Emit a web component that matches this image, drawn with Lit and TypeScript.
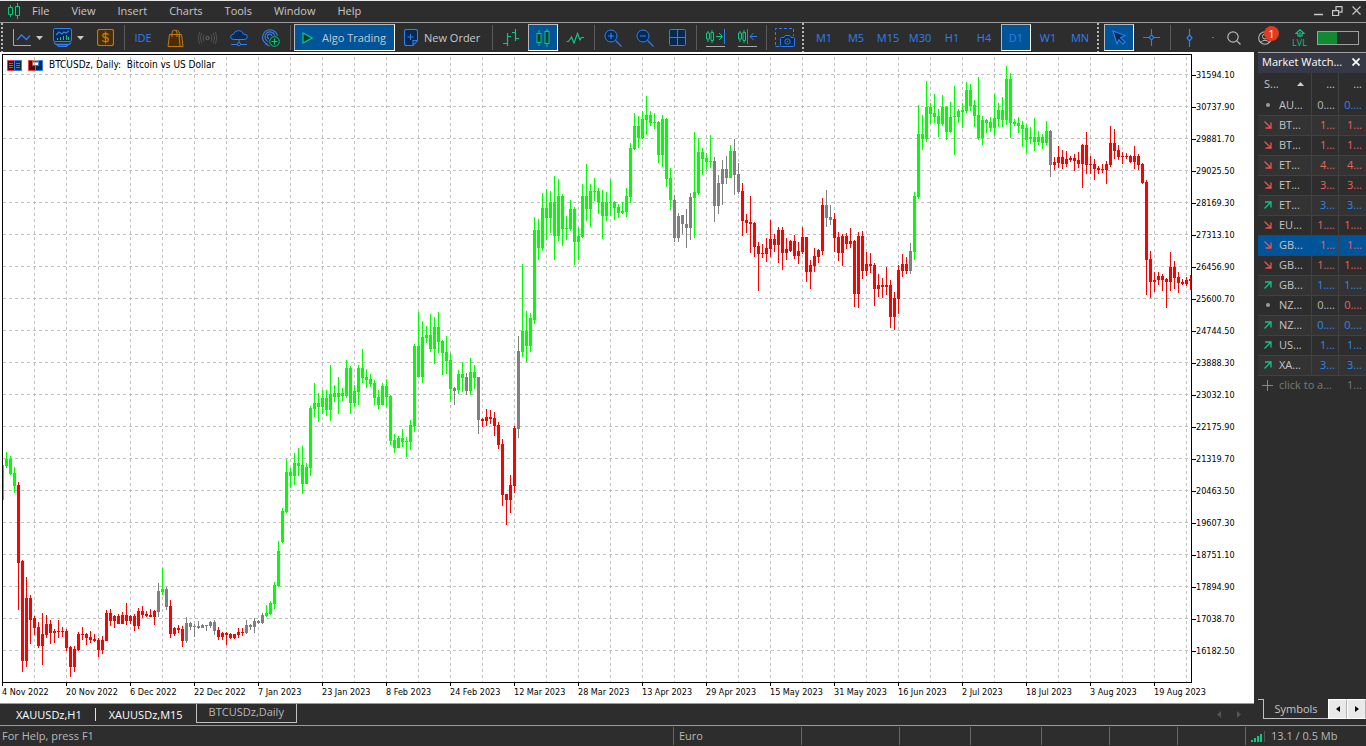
import { LitElement, html, css, svg } from "lit";
import { customElement } from "lit/decorators.js";
import { classMap } from "lit/directives/class-map.js";

const MENU = ["File", "View", "Insert", "Charts", "Tools", "Window", "Help"];
const FRAMES = ["M1", "M5", "M15", "M30", "H1", "H4", "D1", "W1", "MN"];

const PRICES = [
  "31594.10", "30737.90", "29881.70", "29025.50", "28169.30", "27313.10", "26456.90",
  "25600.70", "24744.50", "23888.30", "23032.10", "22175.90", "21319.70", "20463.50",
  "19607.30", "18751.10", "17894.90", "17038.70", "16182.50",
];

const DATES = [
  "4 Nov 2022", "20 Nov 2022", "6 Dec 2022", "22 Dec 2022", "7 Jan 2023", "23 Jan 2023",
  "8 Feb 2023", "24 Feb 2023", "12 Mar 2023", "28 Mar 2023", "13 Apr 2023", "29 Apr 2023",
  "15 May 2023", "31 May 2023", "16 Jun 2023", "2 Jul 2023", "18 Jul 2023", "3 Aug 2023",
  "19 Aug 2023",
];

// Runs of daily bars that share a trend colour: G up, R down, Y neutral.
// Each bar is high, body top, body bottom, low, measured down the price scale.
const RUNS: [string, string][] = [
  ["G", "465,465,499,499 452,459,465,467 456,459,473,474 467,473,485,492"],
  ["R", "482,485,562,609 560,561,660,671 577,598,660,666 595,598,619,643 616,618,627,634 622,627,645,647 613,634,645,664 615,624,634,637 620,624,632,643 629,631,632,642 620,631,631,637 627,631,631,636 629,631,647,650 646,647,666,676 646,649,666,671 632,634,649,650 627,634,634,639 633,634,637,644 631,637,639,642 634,639,640,641 638,640,649,656 636,640,649,653 610,613,640,640 609,613,620,625 615,616,620,627 614,616,623,623 612,615,623,623 603,615,620,624 615,616,620,623 614,616,625,630 608,611,625,628 606,611,614,617 611,614,615,616 609,615,616,616 610,611,616,624"],
  ["Y", "583,591,611,616"],
  ["G", "568,589,591,594"],
  ["Y", "587,589,606,609"],
  ["R", "600,606,633,637 627,628,633,635 625,628,629,632 626,629,640,646"],
  ["Y", "617,623,640,642 622,623,626,629 624,626,626,636 621,626,627,628 624,625,627,627 625,625,625,630 621,622,625,627 620,622,630,634"],
  ["R", "627,630,636,639 632,633,636,639 632,633,634,644 633,634,637,638 634,634,637,638 628,632,634,637 628,632,632,635"],
  ["Y", "620,625,632,633 624,625,626,629 618,621,626,632 620,621,622,623 613,615,622,623"],
  ["G", "605,613,615,616 601,603,613,614 582,585,603,608 541,551,585,586 508,511,541,542 459,472,511,512 468,472,475,487 453,463,475,484 448,463,465,475 446,465,483,493 463,467,483,483 406,408,467,475 383,403,408,416 393,403,406,421 390,398,406,413 390,398,409,415 365,394,409,420 385,393,396,401 377,393,396,413 388,393,395,400 360,368,395,397 366,368,402,413 385,391,402,406 365,368,391,404 349,368,377,382 369,377,379,387 374,379,383,386 380,383,397,404 390,397,404,408 383,386,404,404 379,386,396,406 395,396,440,444 434,440,447,452 436,438,447,447 429,438,441,446 437,441,441,456 420,425,441,449 344,346,425,431 312,346,376,376 321,337,376,382 326,335,337,342 314,335,348,351 317,327,348,363 312,327,341,352 340,341,352,374 336,352,360,373 353,360,388,401"],
  ["Y", "387,388,390,404"],
  ["G", "370,374,389,393 362,374,377,391"],
  ["Y", "373,377,390,394"],
  ["G", "358,372,390,394 365,372,377,388"],
  ["Y", "377,377,419,433"],
  ["R", "418,419,420,426 409,417,420,425 410,417,418,423 412,418,425,435 422,425,444,448 439,444,494,505 494,494,499,524 475,485,499,512 426,428,485,492"],
  ["Y", "336,351,428,437"],
  ["G", "264,331,351,356 311,331,345,361 313,318,345,351 217,230,319,323 219,230,247,259 193,208,247,250 189,208,217,239 191,202,217,232 176,202,235,259 179,196,235,240 194,196,228,245 216,228,228,239 200,209,228,230 207,209,241,264 227,236,241,259 184,196,236,237 164,196,208,220 184,191,208,226 178,191,191,200 188,191,202,213 190,202,215,238 192,202,215,220 179,202,202,215 201,202,207,219 204,207,212,217 202,211,212,213 188,196,211,216 143,148,196,202 113,126,148,149 116,126,137,147 111,119,137,138 96,115,119,134 111,115,122,125 113,122,122,128 121,122,154,162 115,119,154,166 118,119,178,186 168,178,199,209"],
  ["Y", "195,200,237,241 213,216,237,241 215,215,223,233 209,224,227,247 193,197,227,239"],
  ["G", "132,192,197,237 138,152,192,194 148,152,158,174 153,158,161,169 135,161,161,167"],
  ["Y", "157,161,205,221 175,183,205,213 160,169,183,204 156,169,177,183"],
  ["G", "145,151,177,177"],
  ["Y", "139,151,174,194 163,174,191,193"],
  ["R", "183,191,220,235 214,220,222,232 196,222,223,252 222,223,246,256 242,246,253,290 244,253,253,257 238,248,253,261 220,239,248,256 234,239,244,251 227,230,244,262 227,230,252,269 238,249,252,259 240,241,250,251 235,241,255,258 242,251,255,263 227,237,251,253 237,237,271,281 260,265,271,288 248,256,265,271 249,250,256,262 198,205,250,254"],
  ["Y", "190,205,217,226 205,217,219,224"],
  ["R", "213,219,237,251 232,237,252,260 234,236,252,265 233,236,243,248 228,241,243,247 240,241,293,306 232,236,293,307 231,236,270,278 252,264,270,275 253,264,265,272 263,265,288,305 274,285,288,296 278,285,286,297 267,285,286,294 280,285,316,327 292,298,316,329 265,270,298,313 254,264,270,276 257,264,270,273"],
  ["Y", "243,251,270,273"],
  ["G", "192,196,251,259 105,134,196,198 115,134,138,149 81,107,138,141 103,107,113,123 94,113,116,122 109,116,123,136 95,107,123,125 106,107,131,139 102,117,131,132 86,116,116,154 109,111,116,122 103,110,111,127 82,90,110,112 84,90,105,110 100,105,115,126 77,115,137,139 116,120,137,144 119,120,122,132 117,122,127,131 94,118,127,135 103,110,118,126 97,110,119,126 66,79,119,124 73,79,122,137 119,122,123,125 117,123,125,132 121,125,128,146 124,128,139,152 127,137,138,143 118,137,141,150 131,137,141,144 134,137,142,148 121,131,142,144"],
  ["Y", "130,131,164,176"],
  ["R", "157,162,164,169 146,157,162,167 150,157,163,168 151,159,163,166 156,158,159,161 154,158,160,170 152,160,163,167 144,145,163,187 132,145,164,173 156,164,164,173 159,164,168,179 166,168,169,173 164,169,169,172 161,164,169,183 126,143,164,166 129,143,150,158 145,150,156,159 152,156,156,163 153,156,156,158 155,156,161,162 146,156,161,168 154,156,164,169 163,164,182,183 180,182,259,294 251,259,281,297 272,280,281,291 272,276,279,284 274,276,279,290 278,279,281,307 252,267,281,290 261,267,277,288 272,277,282,292 279,282,283,284 277,280,283,285 275,279,280,289"],
];

const INK: Record<string, string> = { G: "#00ff00", R: "#ff0000", Y: "#808080" };
const SCALE_TOP = 55;
const STEP = 4;

type Dir = "down" | "up" | "flat";
type Quote = { s: string; dir: Dir; bid: string; ask: string; bc: string; ac: string; on?: boolean };
const QUOTES: Quote[] = [
  { s: "AU...", dir: "flat", bid: "0....", ask: "0....", bc: "plain", ac: "rise" },
  { s: "BT...", dir: "down", bid: "1...", ask: "1...", bc: "fall", ac: "fall" },
  { s: "BT...", dir: "down", bid: "1...", ask: "1...", bc: "fall", ac: "fall" },
  { s: "ET...", dir: "down", bid: "4...", ask: "4...", bc: "fall", ac: "fall" },
  { s: "ET...", dir: "down", bid: "3...", ask: "3...", bc: "fall", ac: "fall" },
  { s: "ET...", dir: "up", bid: "3...", ask: "3...", bc: "rise", ac: "rise" },
  { s: "EU...", dir: "down", bid: "1....", ask: "1....", bc: "fall", ac: "fall" },
  { s: "GB...", dir: "down", bid: "1...", ask: "1...", bc: "fall", ac: "fall", on: true },
  { s: "GB...", dir: "down", bid: "1....", ask: "1....", bc: "fall", ac: "fall" },
  { s: "GB...", dir: "up", bid: "1....", ask: "1....", bc: "rise", ac: "rise" },
  { s: "NZ...", dir: "flat", bid: "0....", ask: "0....", bc: "plain", ac: "fall" },
  { s: "NZ...", dir: "up", bid: "0....", ask: "0....", bc: "rise", ac: "rise" },
  { s: "US...", dir: "up", bid: "1...", ask: "1...", bc: "rise", ac: "rise" },
  { s: "XA...", dir: "up", bid: "3...", ask: "3...", bc: "rise", ac: "rise" },
];

const B = "#2f7ff0";
const G = "#12c480";
const O = "#c27a0e";
const icon = (w: number, h: number, body: unknown) =>
  html`<svg class="ico" width=${w} height=${h} viewBox="0 0 ${w} ${h}" fill="none" aria-hidden="true">${body}</svg>`;

const icons = {
  logo: icon(12, 16, svg`<path d="M2.500 2v12M9.500 0v16" stroke=${G}/><path d="M.5 4.500h4v7h-4zM7.500 3.500h4v9h-4z" fill="#063c2a" stroke=${G}/>`),
  line: icon(18, 18, svg`<path d="M.5 0v16.500H18" stroke="#a8a8a8"/><path d="M4 11l4.500-5 5 4.500 3.500-4" stroke=${B} stroke-width="1.300"/>`),
  template: icon(19, 19, svg`<rect x=".5" y=".5" width="18" height="13" rx="1.500" fill="#06294f" stroke=${B}/><path d="M1 14.500q1 2 3 2h11q2 0 3-2M4 17l2 1.500h7l2-1.500" stroke=${B} stroke-width="1.300"/><path d="M3 7l3-3 3 2 2-2 2 1 3-2" stroke=${B} stroke-width="1.200"/><path d="M4.500 12v-2M7.500 12V9M10.500 12V8M13.500 12V7M15.500 12V9" stroke=${G}/>`),
  dollar: icon(17, 17, svg`<rect x=".5" y=".5" width="16" height="16" rx="2" fill="#4a2c05" stroke=${O} stroke-width="1.200"/><path d="M11.500 5.800Q11 4.500 8.500 4.500 5.800 4.500 5.800 6.400q0 1.700 2.700 2.100 2.900.4 2.900 2.200 0 1.900-2.900 1.900-2.600 0-3-1.500M8.500 2.500v12" stroke=${O} stroke-width="1.300"/>`),
  bag: icon(17, 18, svg`<path d="M2.500 5.500h12l1.500 12H1z" fill="#4a2c05" stroke=${O}/><path d="M5 8V4Q5 1 7.500 1T10 4v4M8 2q1-1 2.500-.5Q12.500 2 12.500 5v3" stroke=${O}/><path d="M12 6l1 11" stroke=${O}/>`),
  signal: icon(19, 14, svg`<circle cx="9.500" cy="7" r="1.700" stroke="#6c6c6c"/><path d="M6 3.500q-2 3.500 0 7M13 3.500q2 3.500 0 7M3.700 2q-2.700 5 0 10M15.300 2q2.700 5 0 10M1.500 1q-2.500 6 0 12M17.500 1q2.500 6 0 12" stroke="#525252"/>`),
  cloud: icon(18, 16, svg`<path d="M4 9.500Q.6 9.500.6 6.800.6 4.500 3.500 4.200 4.500.6 8.500.6q3.800 0 5 3.400 3.900 0 3.900 2.900 0 2.600-3.400 2.600z" fill="#06294f" stroke=${B}/><path d="M9 10v3M1 14.500h6M11 14.500h6" stroke=${B}/><circle cx="9" cy="14.200" r="1.600" stroke=${B}/>`),
  globe: icon(18, 18, svg`<path d="M6 15.500A7.500 7.500 0 1 1 15.500 7M6 12.500A5 5 0 1 1 12.800 6.500M7 9.800A2.400 2.400 0 1 1 10 7" stroke=${B} stroke-width="1.100"/><path d="M3 14.500q2 2.500 5 2.500" stroke=${B}/><circle cx="12.500" cy="12.500" r="4.800" fill="#063c2a" stroke=${G}/><path d="M12.500 9.500v6M9.500 12.500h6" stroke=${G}/>`),
  play: icon(11, 12, svg`<path d="M1 1l9 5-9 5z" fill="#063c2a" stroke=${G} stroke-width="1.200"/>`),
  order: icon(14, 17, svg`<path d="M2.500.5h9q2 0 2 2v9l-4.500 5H2.500q-2 0-2-2v-12q0-2 2-2zM13 11.500H9v4.500" fill="#06294f" stroke=${B} stroke-width="1.100"/><path d="M6.500 5v6M3.500 8h6" stroke=${B}/>`),
  bars: icon(18, 18, svg`<path d="M5.500 4v13M1 14.500h4M6 7.500h3M13.500 0v12M10 3.500h3M14 9.500h3" stroke=${G} stroke-width="1.200"/>`),
  candles: icon(14, 18, svg`<path d="M3 1v16M11 0v18" stroke=${G}/><rect x="1" y="4.500" width="4" height="9" fill="#063c2a" stroke=${G}/><rect x="9" y="2.500" width="4" height="12" fill="#063c2a" stroke=${G}/>`),
  zigzag: icon(18, 12, svg`<path d="M.5 9.500h2L5.500 5 8 11l3.500-9.500L14 8l1.500-2.500H18" stroke=${G} stroke-width="1.200"/>`),
  zoomIn: icon(18, 18, svg`<circle cx="7" cy="7" r="6" fill="#06294f" stroke=${B}/><path d="M11.500 11.500l6 6M4 7h6M7 4v6" stroke=${B} stroke-width="1.200"/>`),
  zoomOut: icon(18, 18, svg`<circle cx="7" cy="7" r="6" fill="#06294f" stroke=${B}/><path d="M11.500 11.500l6 6M4 7h6" stroke=${B} stroke-width="1.200"/>`),
  tile: icon(17, 17, svg`<rect x=".5" y=".5" width="16" height="16" rx="1" fill="#06294f" stroke=${B}/><path d="M8.500 1v15M1 8.500h15" stroke=${B}/>`),
  shift: icon(19, 18, svg`<path d="M2 2v11M6 1v13" stroke=${G}/><path d="M.5 4h3v6h-3zM5 3.500h2.500v8H5z" fill="#063c2a" stroke=${G}/><path d="M10 7.500h6M13 4l3.500 3.500L13 11" stroke=${G}/><path d="M18.500 0v15" stroke=${B}/><path d="M0 17.500h19" stroke="#a8a8a8"/>`),
  scroll: icon(19, 18, svg`<path d="M2 2v11M6 1v13" stroke=${G}/><path d="M.5 4h3v6h-3zM5 3.500h2.500v8H5z" fill="#063c2a" stroke=${G}/><path d="M12 7.500h7M15.500 4L12 7.500l3.500 3.500M9.500 0v15" stroke=${B}/><path d="M0 17.500h19" stroke="#a8a8a8"/>`),
  camera: icon(20, 19, svg`<path d="M.5 17V.5h18V8" stroke=${B} stroke-dasharray="3 2"/><path d="M.5 18.500h4" stroke=${B}/><path d="M6.500 9.500H9L10.500 7.500h4L16 9.500h2.500q1 0 1 1v7q0 1-1 1h-12q-1 0-1-1v-7q0-1 1-1z" fill="#06294f" stroke=${B}/><circle cx="12.500" cy="13.500" r="2.700" stroke=${B}/><circle cx="12.500" cy="13.500" r=".8" fill=${B}/>`),
  cursor: icon(15, 15, svg`<path d="M1 1l12 4.500-4.500 2.200L13 12l-2 2-4.200-4.300L5 14z" fill="#06294f" stroke=${B} stroke-width="1.100"/>`),
  cross: icon(17, 17, svg`<path d="M8.500 0v6M8.500 11v6M0 8.500h6M11 8.500h6M8.500 6L11 8.500 8.500 11 6 8.500z" stroke=${B} stroke-width="1.100"/>`),
  vline: icon(7, 18, svg`<path d="M3.500 0v6M3.500 12v6M3.500 6L6 9l-2.500 3L1 9z" stroke=${B} stroke-width="1.200"/>`),
  hline: icon(18, 7, svg`<path d="M0 3.500h6M12 3.500h6M6 3.500L9 1l3 2.500L9 6z" stroke=${B}/>`),
  search: icon(14, 14, svg`<circle cx="6" cy="6" r="5.200" stroke="#b8b8b8" stroke-width="1.200"/><path d="M9.800 9.800l3.700 3.700" stroke="#b8b8b8" stroke-width="1.200"/>`),
  user: icon(14, 14, svg`<circle cx="7" cy="7" r="6.300" stroke="#b8b8b8" stroke-width="1.100"/><circle cx="7" cy="5.500" r="2.500" stroke="#b8b8b8"/><path d="M2.500 11.500q4.500-4.500 9 0" stroke="#b8b8b8"/>`),
  level: icon(10, 9, svg`<path d="M5 .7L9 4.500H7V7H3V4.500H1z" stroke=${G} stroke-width="1.200"/><path d="M5 3v5.500" stroke=${G}/>`),
  depth: icon(15, 11, svg`<path d="M.5.500h7v10h-7z" fill="#3a1010" stroke="#e8413c"/><path d="M7.500.5h7v10h-7z" fill="#06294f" stroke=${B}/><path d="M2 3.500h4M2 5.500h4M2 7.500h4" stroke="#e8413c"/><path d="M9 3.500h4M9 5.500h4M9 7.500h4" stroke=${B}/>`),
  oneClick: icon(15, 11, svg`<path d="M.5.500h4v5h3v5h-7z" fill="#4a1010" stroke="#e8413c"/><path d="M14.500.5h-4v5h-3v5h7z" fill="#06294f" stroke=${B}/><path d="M5 1.500h5" stroke="#555" stroke-width="2"/>`),
  down: icon(8, 8, svg`<path d="M.5.500l6 6M1.500 7H7V1.500" stroke="#f0504e" stroke-width="1.300"/>`),
  up: icon(8, 8, svg`<path d="M.5 7.500l6-6M1 1h6v5.500" stroke=${G} stroke-width="1.300"/>`),
  flat: icon(8, 8, svg`<circle cx="4" cy="4" r="2" fill="#9a9a9a"/>`),
  plus: icon(11, 11, svg`<path d="M5.500 0v11M0 5.500h11" stroke=${G}/>`),
  bar5: icon(14, 11, svg`<path d="M1 11V9M4 11V7M7 11V5M10 11V3" stroke=${G} stroke-width="2"/><path d="M13.500 11V0" stroke="#555"/>`),
};

@customElement("trend-chart")
class TrendChart extends LitElement {
  static styles = css`
    :host { display: grid; grid-template-columns: minmax(0, 1fr) 62px; grid-template-rows: minmax(0, 1fr) 20px;
      padding: 2px 0 0 2px; background: #fff; color: #000; font: 9px/12px "DejaVu Sans Condensed", "DejaVu Sans", sans-serif; overflow: hidden; }
    .plot { position: relative; border: 1px solid #000; overflow: hidden; }
    .field { display: block; width: 100%; height: 100%; }
    .caption { position: absolute; left: 4px; top: 4px; display: flex; align-items: center; gap: 6px; white-space: pre; font-size: 10px; }
    .ico { display: block; flex: none; }
    .prices, .dates { margin: 0; padding: 0; list-style: none; overflow: hidden; }
    .prices { padding-top: 5px; }
    .price { display: flex; align-items: center; height: 32px; }
    .price::before { content: ""; width: 4px; height: 1px; background: #000; }
    .dates { grid-column: 1 / 3; display: flex; }
    .date { flex: none; width: 64px; white-space: nowrap; line-height: 12px; }
    .date::before { content: ""; display: block; width: 1px; height: 3px; background: #000; }
  `;

  private bars() {
    let i = 0;
    return RUNS.map(([trend, list]) => {
      let wicks = "";
      let bodies = "";
      for (const bar of list.split(" ")) {
        const [high, top, bottom, low] = bar.split(",").map((v) => Number(v) - SCALE_TOP);
        const x = STEP * i++ - 1;
        wicks += `M${x} ${high}h1V${low + 1}h-1z`;
        bodies += `M${x - 1} ${top}h3V${bottom + 1}h-3z`;
      }
      return svg`<path d=${wicks} fill=${INK[trend]} /><path d=${bodies} fill=${INK[trend]} />`;
    });
  }

  private grid() {
    let d = "";
    for (let k = 0; k < 37; k++) d += `M${31.5 + 32 * k} 2v626`;
    for (let k = 0; k < 19; k++) d += `M0 ${19.5 + 32 * k}H1188`;
    return svg`<path d=${d} stroke="#c0c0c0" stroke-dasharray="3 3" fill="none" />`;
  }

  render() {
    return html`
      <div class="plot">
        <svg class="field" role="img" aria-label="BTCUSDz daily candles">${this.grid()}${this.bars()}</svg>
        <div class="caption">${icons.depth}${icons.oneClick}<span>BTCUSDz, Daily:  Bitcoin vs US Dollar</span></div>
      </div>
      <ul class="prices">${PRICES.map((p) => html`<li class="price">${p}</li>`)}</ul>
      <ul class="dates">${DATES.map((d) => html`<li class="date">${d}</li>`)}</ul>
    `;
  }
}

@customElement("market-watch")
class MarketWatch extends LitElement {
  static styles = css`
    :host { display: flex; flex-direction: column; background: #2d2d2d; color: #c4c4c4; font: 11px/16px "Open Sans", sans-serif; }
    button { appearance: none; border: 0; margin: 0; padding: 0; background: none; color: inherit; font: inherit; }
    .ico { display: block; flex: none; }
    .head { display: flex; align-items: center; justify-content: space-between; height: 18px; padding: 0 6px 2px 4px;
      background: #363846; color: #fff; border-top: 1px solid #a0a0a0; white-space: nowrap; }
    .list { border-collapse: collapse; table-layout: fixed; width: 100%; }
    .sym { width: 53px; }
    th, td { padding: 0 3px 2px 0; height: 17px; text-align: right; font-weight: 400; white-space: nowrap; overflow: hidden; border-bottom: 1px solid #414141; border-right: 1px solid #414141; }
    th:last-child, td:last-child { border-right: 0; padding-right: 4px; }
    .titles th { height: 21px; border-bottom: 0; }
    .titles th:first-child { padding-left: 6px; }
    .first, .titles .first { text-align: left; }
    .cell { display: flex; align-items: center; gap: 7px; padding-left: 6px; }
    .sort { display: flex; align-items: center; justify-content: space-between; padding-right: 4px; }
    .alt { background: #333; }
    .on { background: #00549a; }
    .plain { color: #b8b8b8; }
    .rise { color: #2a8ae8; }
    .fall { color: #e8645e; }
    .add td { color: #7a7a7a; border: 0; height: 18px; }
    .add .cell { gap: 6px; padding-left: 4px; }
    .foot { display: flex; margin-top: auto; height: 26px; }
    .lead { width: 5px; height: 1px; background: #c0c0c0; }
    .tab { border: 1px solid #c0c0c0; border-top: 0; border-right: 0; height: 20px; flex: 1; }
    .nav { display: grid; place-items: center; width: 19px; height: 20px; background: #e9e9e9; border: 1px solid #fff; border-right-color: #b0b0b0; box-sizing: border-box; }
  `;

  render() {
    return html`
      <div class="head"><span>Market Watch...</span><button aria-label="Close">${icon(8, 8, svg`<path d="M.5.500l7 7M7.500.5l-7 7" stroke="#fff" stroke-width="1.800"/>`)}</button></div>
      <table class="list">
        <colgroup><col class="sym" /><col /><col /></colgroup>
        <tr class="titles">
          <th class="first"><span class="sort">S...${icon(7, 4, svg`<path d="M0 4l3.500-4L7 4z" fill="#d0d0d0"/>`)}</span></th>
          <th>...</th><th>...</th>
        </tr>
        ${QUOTES.map((q, i) => html`
          <tr class=${classMap({ alt: i % 2 === 1, on: !!q.on })}>
            <td class="first"><span class="cell">${icons[q.dir]}${q.s}</span></td>
            <td class=${q.bc}>${q.bid}</td><td class=${q.ac}>${q.ask}</td>
          </tr>`)}
        <tr class="add"><td class="first" colspan="2"><span class="cell">${icons.plus}click to a...</span></td><td>1...</td></tr>
      </table>
      <div class="foot">
        <span class="lead"></span><button class="tab">Symbols</button>
        <button class="nav" aria-label="Previous tab">${icon(4, 6, svg`<path d="M4 0v6L0 3z" fill="#000"/>`)}</button>
        <button class="nav" aria-label="Next tab">${icon(4, 6, svg`<path d="M0 0v6l4-3z" fill="#000"/>`)}</button>
      </div>
    `;
  }
}

@customElement("app-root")
class AppRoot extends LitElement {
  static styles = css`
    :host { display: flex; flex-direction: column; height: 100vh; background: #2d2d2d; color: #c8c8c8; font: 11px/16px "Open Sans", sans-serif; overflow: hidden; }
    button { appearance: none; border: 0; margin: 0; padding: 0; background: none; color: inherit; font: inherit; white-space: nowrap; }
    .ico { display: block; flex: none; }
    .menu { display: flex; align-items: center; height: 19px; flex: none; border-top: 1px solid #e8e8e8; border-bottom: 1px solid #9a9a9a; padding: 0 5px 2px 8px; }
    .menu > .ico { margin-right: 1px; }
    .menu .item { padding: 0 11px; }
    .win { display: flex; align-items: center; gap: 9px; margin-left: auto; }
    .tools { display: flex; justify-content: space-between; height: 29px; flex: none; }
    .strip { display: flex; align-items: center; gap: 2px; flex: 1; min-width: 0; overflow: hidden; padding-left: 1px; }
    .grip { flex: none; width: 5px; height: 29px; background: linear-gradient(90deg, #b8b8b8 2px, transparent 2px);
      mask-image: repeating-linear-gradient(#000 0 2px, transparent 2px 4px); }
    .sep { flex: none; width: 1px; height: 25px; margin: 0 1px 0 2px; background: #5c5c5c; }
    .btn { display: flex; align-items: center; justify-content: center; flex: none; width: 30px; height: 27px; box-sizing: border-box; color: #2f7ff0; }
    .drop { width: 39px; gap: 5px; }
    .wide { justify-content: flex-start; width: auto; min-width: 91px; padding: 0 4px 0 7px; gap: 6px; color: #c8c8c8; }
    .on { background: #00549a; border: 1px solid #fff; border-top-color: #b8b8b8; border-left-color: #b8b8b8; }
    .wide.on { min-width: 101px; gap: 9px; }
    .side { display: flex; align-items: center; flex: none; padding-right: 7px; }
    .look { width: 44px; padding-left: 13px; }
    .account { display: flex; position: relative; width: 24px; height: 20px; align-items: center; }
    .badge { position: absolute; left: 6px; top: -2px; width: 15px; height: 15px; border-radius: 50%; background: #e23b20; color: #fff; text-align: center; line-height: 15px; }
    .level { display: flex; flex-direction: column; align-items: center; width: 35px; color: #12c480; font-size: 9px; line-height: 9px; }
    .battery { width: 42px; height: 14px; box-sizing: border-box; border: 1px solid #a0a0a0; background: linear-gradient(90deg, #118a35 19px, transparent 19px); }
    .main { display: flex; flex: 1; min-height: 0; }
    .left { display: flex; flex-direction: column; flex: 1; min-width: 0; border-right: 4px solid #2d2d2d; }
    .left trend-chart { flex: 1; min-height: 0; }
    market-watch { flex: none; width: 108px; }
    .tabs { display: flex; align-items: center; height: 21px; flex: none; border-top: 1px solid #9a9a9a; }
    .tab { color: #fff; padding: 0 13px; height: 13px; line-height: 11px; border-right: 1px solid #e0e0e0; }
    .tab:first-child { padding-left: 16px; }
    .tab.last { border-right: 0; }
    .tab.cur { align-self: flex-start; box-sizing: border-box; height: 19px; padding: 0 12px 3px; line-height: 15px; border: 1px solid #c0c0c0; border-top: 0; color: #b8b8b8; }
    .flip { display: flex; gap: 16px; margin: 0 13px 0 auto; }
    .status { display: flex; align-items: center; height: 20px; flex: none; border-top: 1px solid #9a9a9a; color: #b8b8b8; padding-left: 2px; }
    .pane { box-sizing: border-box; height: 18px; line-height: 18px; flex: none; border-left: 1px solid #686868; padding-left: 5px; }
    .help { flex: 1; }
    .w128 { width: 128px; }
    .w98 { width: 98px; }
    .w71 { width: 71px; }
    .w68 { width: 68px; }
    .net { display: flex; align-items: center; gap: 6px; width: 121px; }
  `;

  private tool(name: string, body: unknown, on = false) {
    return html`<button class=${classMap({ btn: true, on })} aria-label=${name}>${body}</button>`;
  }

  private drop(name: string, body: unknown) {
    return html`<button class="btn drop" aria-label=${name}>${body}${icon(7, 4, svg`<path d="M0 0h7L3.500 4z" fill="#c8c8c8"/>`)}</button>`;
  }

  render() {
    const sep = html`<span class="sep"></span>`;
    return html`
      <nav class="menu">
        ${icons.logo}
        ${MENU.map((m) => html`<button class="item">${m}</button>`)}
        <div class="win">
          <button aria-label="Minimize">${icon(9, 10, svg`<path d="M0 8.500h9" stroke="#c8c8c8" stroke-width="1.500"/>`)}</button>
          <button aria-label="Restore">${icon(11, 10, svg`<path d="M.6 4.600h6v5h-6zM4 4V.6h6v5.500H7" stroke="#c8c8c8" stroke-width="1.200"/>`)}</button>
          <button aria-label="Close">${icon(9, 9, svg`<path d="M.5.500l8 8M8.500.5l-8 8" stroke="#c8c8c8" stroke-width="1.100"/>`)}</button>
        </div>
      </nav>
      <div class="tools">
        <div class="strip">
          <span class="grip"></span>
          ${this.drop("Chart type", icons.line)}${this.drop("Templates", icons.template)}${this.tool("Trading", icons.dollar)}
          ${sep}
          ${this.tool("IDE", "IDE")}${this.tool("Market", icons.bag)}${this.tool("Signals", icons.signal)}${this.tool("VPS", icons.cloud)}${this.tool("Community", icons.globe)}
          ${sep}
          <button class="btn wide on">${icons.play}Algo Trading</button>
          <button class="btn wide">${icons.order}New Order</button>
          ${sep}
          ${this.tool("Bars", icons.bars)}${this.tool("Candles", icons.candles, true)}${this.tool("Line", icons.zigzag)}
          ${sep}
          ${this.tool("Zoom in", icons.zoomIn)}${this.tool("Zoom out", icons.zoomOut)}${this.tool("Tile windows", icons.tile)}
          ${sep}
          ${this.tool("Shift end", icons.shift)}${this.tool("Auto scroll", icons.scroll)}
          ${sep}
          ${this.tool("Screenshot", icons.camera)}
          <span class="grip"></span>
          ${FRAMES.map((f) => this.tool(f, f, f === "D1"))}
          <span class="grip"></span>
          ${this.tool("Cursor", icons.cursor, true)}${this.tool("Crosshair", icons.cross)}
          ${sep}
          ${this.tool("Vertical line", icons.vline)}${this.tool("Horizontal line", icons.hline)}
        </div>
        <div class="side">
          <button class="look" aria-label="Search">${icons.search}</button>
          <button class="account" aria-label="Account">${icons.user}<span class="badge">1</span></button>
          <span class="level">${icons.level}LVL</span>
          <span class="battery"></span>
        </div>
      </div>
      <div class="main">
        <div class="left">
          <trend-chart></trend-chart>
          <div class="tabs">
            <button class="tab">XAUUSDz,H1</button><button class="tab last">XAUUSDz,M15</button><button class="tab cur">BTCUSDz,Daily</button>
            <div class="flip">
              <button aria-label="Scroll left">${icon(4, 7, svg`<path d="M4 0v7L0 3.500z" fill="#555"/>`)}</button>
              <button aria-label="Scroll right">${icon(4, 7, svg`<path d="M0 0v7l4-3.500z" fill="#555"/>`)}</button>
            </div>
          </div>
        </div>
        <market-watch></market-watch>
      </div>
      <footer class="status">
        <span class="help">For Help, press F1</span>
        <span class="pane w128">Euro</span><span class="pane w98"></span><span class="pane w71"></span><span class="pane w71"></span>
        <span class="pane w68"></span><span class="pane w68"></span><span class="pane w68"></span>
        <span class="pane net">${icons.bar5}13.1 / 0.5 Mb</span>
      </footer>
    `;
  }
}
